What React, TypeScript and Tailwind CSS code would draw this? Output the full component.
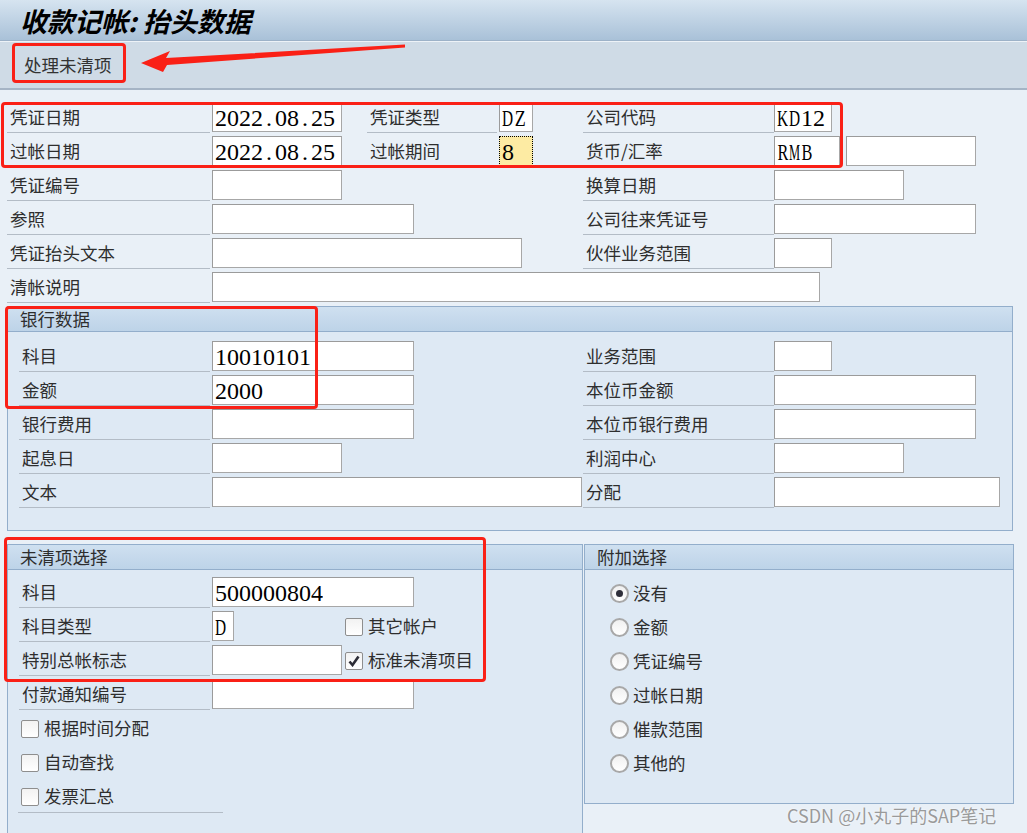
import clsx from "clsx";

// per-letter horizontal squeeze so each glyph fits its 12px cell
const SQUEEZE: Record<string, string> = {
	M: "scale-x-[0.52]",
	R: "scale-x-[0.68]",
	B: "scale-x-[0.68]",
	K: "scale-x-[0.64]",
	D: "scale-x-[0.64]",
	Z: "scale-x-[0.75]",
};

function Val({ text }: { text: string }) {
	return (
		<span className="flex font-['Liberation_Serif',serif] text-[24px] leading-none text-black">
			{text.split("").map((c, i) => (
				<span key={i} className="w-[12px] flex justify-center overflow-hidden">
					<span className={clsx("inline-block", SQUEEZE[c])}>{c}</span>
				</span>
			))}
		</span>
	);
}

function Label({ w, text }: { w: string; text: string }) {
	return (
		<div
			className={clsx(
				w,
				"h-[31px] shrink-0 border-b border-[#b3bcc6] pl-[3px] flex items-center text-[17.5px] text-[#2e2e2e] whitespace-nowrap"
			)}
		>
			{text}
		</div>
	);
}

function Input({ w, value, yellow }: { w: string; value?: string; yellow?: boolean }) {
	return (
		<div
			className={clsx(
				w,
				"h-[30px] shrink-0 flex items-center pl-[2px] pt-[1px]",
				yellow
					? "bg-[#fdeba3] border border-dotted border-black"
					: "bg-white border border-[#a7a7a7] border-t-[#9b9b9b] border-l-[#9b9b9b]"
			)}
		>
			{value && <Val text={value} />}
		</div>
	);
}

function Check({ text, checked }: { text: string; checked?: boolean }) {
	return (
		<div className="flex items-center gap-[5px] h-[31px]">
			<div className="w-[18px] h-[18px] border border-[#8e8e8e] rounded-[2px] bg-gradient-to-b from-[#f2f2f2] to-white flex items-center justify-center">
				{checked && (
					<svg width="12" height="12" viewBox="0 0 12 12">
						<path d="M1.5 6.5 L4.5 10 L10.5 1.5" fill="none" stroke="#2b2b35" strokeWidth="2.6" />
					</svg>
				)}
			</div>
			<span className="text-[17.5px] text-[#2e2e2e]">{text}</span>
		</div>
	);
}

function Radio({ text, on }: { text: string; on?: boolean }) {
	return (
		<div className="flex items-center gap-[4px] h-[31px] mb-[3px]">
			<div className="w-[19px] h-[19px] rounded-full border-2 border-[#a8a8a8] bg-gradient-to-b from-[#f0f0f0] to-white flex items-center justify-center">
				{on && <div className="w-[7px] h-[7px] rounded-full bg-[#2f2f3a]" />}
			</div>
			<span className="text-[17.5px] text-[#2e2e2e]">{text}</span>
		</div>
	);
}

function GroupHead({ text }: { text: string }) {
	return (
		<div className="h-[25px] border-b border-[#93aecb] bg-gradient-to-b from-[#cfe0f0] to-[#bdd3e8] pl-[12px] flex items-center text-[17.5px] text-[#2e2e2e]">
			{text}
		</div>
	);
}

export default function App() {
	return (
		<div className="relative w-[1027px] h-[833px] overflow-hidden bg-[#e9f0f7] font-['Noto_Sans_CJK_SC',sans-serif]">
			{/* title */}
			<div className="h-[41px] border-b border-[#9db2c8] bg-gradient-to-b from-[#d6e4f0] to-[#a9c1d8] pl-[20px] flex items-center">
				<span className="text-[27px] font-bold italic text-black leading-none">收款记帐: 抬头数据</span>
			</div>
			{/* toolbar */}
			<div className="h-[49px] border-t border-[#edf2f7] border-b-2 border-b-[#a5b4c5] bg-[#cfdbe6] pl-[24px] flex items-center">
				<span className="text-[17.5px] text-[#333]">处理未清项</span>
			</div>

			<div className="pl-[7px] pt-[12px]">
				{/* header rows */}
				<div className="flex h-[31px] mb-[3px]">
					<div className="w-[360px] flex shrink-0 gap-[2px]">
						<Label w="w-[203px]" text="凭证日期" />
						<Input w="w-[130px]" value="2022.08.25" />
					</div>
					<div className="w-[216px] flex shrink-0 gap-[2px]">
						<Label w="w-[130px]" text="凭证类型" />
						<Input w="w-[34px]" value="DZ" />
					</div>
					<div className="flex">
						<Label w="w-[191px]" text="公司代码" />
						<Input w="w-[58px]" value="KD12" />
					</div>
				</div>
				<div className="flex h-[31px] mb-[3px]">
					<div className="w-[360px] flex shrink-0 gap-[2px]">
						<Label w="w-[203px]" text="过帐日期" />
						<Input w="w-[130px]" value="2022.08.25" />
					</div>
					<div className="w-[216px] flex shrink-0 gap-[2px]">
						<Label w="w-[130px]" text="过帐期间" />
						<Input w="w-[34px]" value="8" yellow />
					</div>
					<div className="flex gap-[6px]">
						<div className="flex">
							<Label w="w-[191px]" text="货币/汇率" />
							<Input w="w-[66px]" value="RMB" />
						</div>
						<Input w="w-[130px]" />
					</div>
				</div>
				<div className="flex h-[31px] mb-[3px]">
					<div className="w-[576px] flex shrink-0 gap-[2px]">
						<Label w="w-[203px]" text="凭证编号" />
						<Input w="w-[130px]" />
					</div>
					<div className="flex">
						<Label w="w-[191px]" text="换算日期" />
						<Input w="w-[130px]" />
					</div>
				</div>
				<div className="flex h-[31px] mb-[3px]">
					<div className="w-[576px] flex shrink-0 gap-[2px]">
						<Label w="w-[203px]" text="参照" />
						<Input w="w-[202px]" />
					</div>
					<div className="flex">
						<Label w="w-[191px]" text="公司往来凭证号" />
						<Input w="w-[202px]" />
					</div>
				</div>
				<div className="flex h-[31px] mb-[3px]">
					<div className="w-[576px] flex shrink-0 gap-[2px]">
						<Label w="w-[203px]" text="凭证抬头文本" />
						<Input w="w-[310px]" />
					</div>
					<div className="flex">
						<Label w="w-[191px]" text="伙伴业务范围" />
						<Input w="w-[58px]" />
					</div>
				</div>
				<div className="flex h-[31px] mb-[3px] gap-[2px]">
					<Label w="w-[203px]" text="清帐说明" />
					<Input w="w-[608px]" />
				</div>

				{/* bank data */}
				<div className="w-[1006px] h-[225px] border border-[#93aecb] bg-[#dee9f4]">
					<GroupHead text="银行数据" />
					<div className="pt-[9px] pl-[11px]">
						{[
							["科目", "w-[202px]", "10010101", "业务范围", "w-[58px]"],
							["金额", "w-[202px]", "2000", "本位币金额", "w-[202px]"],
							["银行费用", "w-[202px]", "", "本位币银行费用", "w-[202px]"],
							["起息日", "w-[130px]", "", "利润中心", "w-[130px]"],
							["文本", "w-[370px]", "", "分配", "w-[226px]"],
						].map((r, i) => (
							<div key={i} className="flex h-[31px] mb-[3px]">
								<div className="w-[564px] flex shrink-0 gap-[2px]">
									<Label w="w-[191px]" text={r[0]} />
									<Input w={r[1]} value={r[2]} />
								</div>
								<div className="flex">
									<Label w="w-[191px]" text={r[3]} />
									<Input w={r[4]} />
								</div>
							</div>
						))}
					</div>
				</div>

				<div className="flex mt-[13px] gap-[1px]">
					{/* open item selection */}
					<div className="w-[576px] h-[300px] border border-[#93aecb] bg-[#dee9f4]">
						<GroupHead text="未清项选择" />
						<div className="pt-[7px] pl-[11px]">
							<div className="flex h-[31px] mb-[3px] gap-[2px]">
								<Label w="w-[191px]" text="科目" />
								<Input w="w-[202px]" value="500000804" />
							</div>
							<div className="flex h-[31px] mb-[3px]">
								<div className="w-[326px] flex shrink-0 gap-[2px]">
									<Label w="w-[191px]" text="科目类型" />
									<Input w="w-[22px]" value="D" />
								</div>
								<Check text="其它帐户" />
							</div>
							<div className="flex h-[31px] mb-[3px]">
								<div className="w-[326px] flex shrink-0 gap-[2px]">
									<Label w="w-[191px]" text="特别总帐标志" />
									<Input w="w-[130px]" />
								</div>
								<Check text="标准未清项目" checked />
							</div>
							<div className="flex h-[31px] mb-[3px] gap-[2px]">
								<Label w="w-[191px]" text="付款通知编号" />
								<Input w="w-[202px]" />
							</div>
							<div className="pl-[2px] h-[31px] mb-[3px]">
								<Check text="根据时间分配" />
							</div>
							<div className="pl-[2px] h-[31px] mb-[3px]">
								<Check text="自动查找" />
							</div>
							<div className="w-[205px] -ml-[1px] pl-[3px] h-[32px] border-b border-[#b3bcc6]">
								<Check text="发票汇总" />
							</div>
						</div>
					</div>
					{/* additional selection */}
					<div className="w-[430px] h-[260px] border border-[#93aecb] bg-[#dee9f4]">
						<GroupHead text="附加选择" />
						<div className="pt-[8px] pl-[25px]">
							<Radio text="没有" on />
							<Radio text="金额" />
							<Radio text="凭证编号" />
							<Radio text="过帐日期" />
							<Radio text="催款范围" />
							<Radio text="其他的" />
						</div>
					</div>
				</div>
			</div>

			{/* red annotations */}
			<div className="absolute left-[12px] top-[43px] w-[114px] h-[40px] border-[3px] border-[#fa2016] rounded-[4px]" />
			<div className="absolute left-[1px] top-[102px] w-[842px] h-[66px] border-[3px] border-[#fa2016] rounded-[4px]" />
			<div className="absolute left-[5px] top-[306px] w-[313px] h-[103px] border-[3px] border-[#fa2016] rounded-[4px]" />
			<div className="absolute left-[4px] top-[537px] w-[482px] h-[145px] border-[3px] border-[#fa2016] rounded-[4px]" />
			<svg className="absolute left-0 top-0" width="420" height="90" viewBox="0 0 420 90">
				<polygon points="141,63 170,51 166,58 405,44.5 405,47.5 167,65 163,72" fill="#fa2016" />
			</svg>

			{/* watermark */}
			<div className="absolute left-[787px] top-[803px] text-[18px] leading-[24px] text-[#9a9a9a] [text-shadow:0_0_2px_#fff]">
				CSDN @小丸子的SAP笔记
			</div>
		</div>
	);
}
